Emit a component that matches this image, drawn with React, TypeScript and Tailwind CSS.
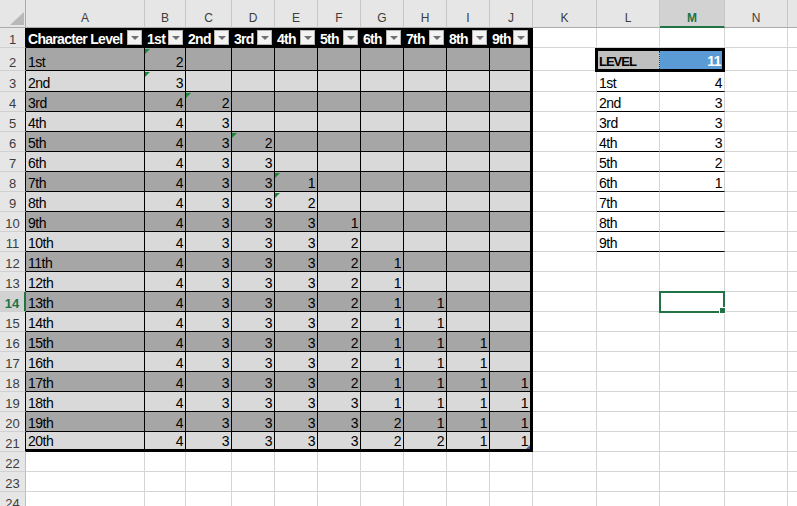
import type { ReactNode } from "react";

const LETTERS = ["A", "B", "C", "D", "E", "F", "G", "H", "I", "J", "K", "L", "M", "N", ""];
const ORD = [
  "1st", "2nd", "3rd", "4th", "5th", "6th", "7th", "8th", "9th", "10th",
  "11th", "12th", "13th", "14th", "15th", "16th", "17th", "18th", "19th", "20th",
];

// spell slots per character level (columns B..J)
const SLOTS = [
  [2],
  [3],
  [4, 2],
  [4, 3],
  [4, 3, 2],
  [4, 3, 3],
  [4, 3, 3, 1],
  [4, 3, 3, 2],
  [4, 3, 3, 3, 1],
  [4, 3, 3, 3, 2],
  [4, 3, 3, 3, 2, 1],
  [4, 3, 3, 3, 2, 1],
  [4, 3, 3, 3, 2, 1, 1],
  [4, 3, 3, 3, 2, 1, 1],
  [4, 3, 3, 3, 2, 1, 1, 1],
  [4, 3, 3, 3, 2, 1, 1, 1],
  [4, 3, 3, 3, 2, 1, 1, 1, 1],
  [4, 3, 3, 3, 3, 1, 1, 1, 1],
  [4, 3, 3, 3, 3, 2, 1, 1, 1],
  [4, 3, 3, 3, 3, 2, 2, 1, 1],
];

const FLAGS = ["2-2", "3-2", "4-3", "6-4", "8-5", "9-5"];
const LEVEL_SLOTS = [4, 3, 3, 3, 2, 1];
const ROWS = 24;
const COLS = 15;

function Dropdown() {
  return (
    <span className="mb-[1px] ml-auto mr-[2px] flex h-[15px] w-[15px] shrink-0 items-center justify-center border border-[#b4b4b4] bg-[#f3f3f3]">
      <span className="h-0 w-0 border-x-[4px] border-t-[4px] border-x-transparent border-t-[#707070]" />
    </span>
  );
}

function Flag() {
  return (
    <span className="absolute left-0 top-[1px] h-0 w-0 border-r-[5px] border-t-[5px] border-r-transparent border-t-[#1a8a3a]" />
  );
}

function renderCell(r: number, c: number): ReactNode {
  const key = `${r}-${c}`;

  // column header strip
  if (r === 0) {
    if (c === 0) {
      return (
        <div key={key} className="border-b border-r border-[#ababab] bg-[#e6e6e6]">
          <svg width="26" height="28" className="block">
            <polygon points="10,25 24,25 24,12" fill="#b9b9b9" />
          </svg>
        </div>
      );
    }
    if (c === 13) {
      return (
        <div
          key={key}
          className="flex items-end justify-center border-b-2 border-r border-b-[#217346] border-r-[#c6c6c6] bg-[#d2d2d2] pb-[2px] text-[12px] font-bold leading-[12px] text-[#217346]"
        >
          {LETTERS[c - 1]}
        </div>
      );
    }
    return (
      <div
        key={key}
        className="flex items-end justify-center border-b border-r border-b-[#ababab] border-r-[#c6c6c6] bg-[#e6e6e6] pb-[3px] text-[12px] leading-[12px] text-[#3c3c3c]"
      >
        {LETTERS[c - 1]}
      </div>
    );
  }

  // row header column
  if (c === 0) {
    if (r === 14) {
      return (
        <div
          key={key}
          className="flex items-end justify-center border-b border-r-2 border-b-[#d0d0d0] border-r-[#217346] bg-[#d2d2d2] pb-[1px] text-[13px] font-bold leading-[13px] text-[#217346]"
        >
          {r}
        </div>
      );
    }
    return (
      <div
        key={key}
        className={`flex items-end justify-center border-b border-r border-b-[#d0d0d0] bg-[#e6e6e6] pb-[1px] text-[13px] leading-[13px] text-[#3c3c3c] ${
          r <= 21 ? "border-r-black" : "border-r-[#bfbfbf]"
        }`}
      >
        {r}
      </div>
    );
  }

  const text = "relative flex items-end whitespace-nowrap pb-[1px] text-[14px] leading-[14px] tracking-[-0.5px]";

  // the table A1:J21
  if (r <= 21 && c <= 10) {
    const edge = `${c === 10 ? "border-r-[3px]" : "border-r"} ${r === 21 ? "border-b-[3px]" : "border-b"}`;
    if (r === 1) {
      const label = c === 1 ? "Character Level" : ORD[c - 2];
      return (
        <div key={key} className={`${text} ${edge} overflow-hidden border-black bg-black pl-[2px] font-bold tracking-[-0.7px] text-white`}>
          <span>{label}</span>
          <Dropdown />
        </div>
      );
    }
    const bg = r % 2 === 0 ? "bg-[#a6a6a6]" : "bg-[#d9d9d9]";
    if (c === 1) {
      return (
        <div key={key} className={`${text} ${edge} ${bg} border-black pl-[2px]`}>
          {ORD[r - 2]}
        </div>
      );
    }
    const v = SLOTS[r - 2][c - 2];
    return (
      <div key={key} className={`${text} ${edge} ${bg} justify-end border-black pr-[2px]`}>
        {FLAGS.includes(key) && <Flag />}
        {v ?? ""}
        {r === 21 && c === 10 && (
          <span className="absolute bottom-0 right-0 h-0 w-0 border-b-[4px] border-l-[4px] border-b-[#4b5aa6] border-l-transparent" />
        )}
      </div>
    );
  }

  // LEVEL box over L2:M2
  if (r === 2 && c === 12) {
    return (
      <div key={key} className="relative z-10 col-span-2 mb-[-1px] ml-[-2px] flex border-[3px] border-black text-[13px] font-bold leading-[13px]">
        <div className="flex w-[62px] items-end border-r border-dotted border-r-[#3a3a3a] bg-[#bfbfbf] pb-[1px] pl-[1px] tracking-[-1px]">
          LEVEL
        </div>
        <div className="flex flex-1 items-end justify-end bg-[#5b9bd5] pb-[1px] pr-[1px] text-[14px] leading-[14px] tracking-[-0.5px] text-white">
          11
        </div>
      </div>
    );
  }
  if (r === 2 && c === 13) return null;

  // slots lookup L3:M11
  if (r >= 3 && r <= 11 && (c === 12 || c === 13)) {
    if (c === 12) {
      return (
        <div key={key} className={`${text} border-b border-r border-b-black border-r-[#d4d4d4] pl-[2px]`}>
          {ORD[r - 3]}
        </div>
      );
    }
    return (
      <div key={key} className={`${text} justify-end border-b border-r border-b-black border-r-[#d4d4d4] pr-[2px]`}>
        {LEVEL_SLOTS[r - 3] ?? ""}
      </div>
    );
  }

  // active cell M14
  if (r === 14 && c === 13) {
    return (
      <div key={key} className="relative border-b border-r border-[#d4d4d4]">
        <div className="pointer-events-none absolute bottom-[-2px] left-[-1px] right-[-1px] top-[-1px] z-20 border-2 border-[#217346]">
          <span className="absolute bottom-[-3px] right-[-3px] h-[7px] w-[7px] border border-white bg-[#217346]" />
        </div>
      </div>
    );
  }

  return <div key={key} className="border-b border-r border-[#d4d4d4]" />;
}

export default function App() {
  const cells: ReactNode[] = [];
  for (let r = 0; r <= ROWS; r++) {
    for (let c = 0; c <= COLS; c++) {
      cells.push(renderCell(r, c));
    }
  }

  return (
    <div className="h-[506px] w-[797px] overflow-hidden bg-white font-['Liberation_Sans',Arial,sans-serif] text-black">
      <div className="grid w-max grid-cols-[26px_119px_41px_46px_43px_43px_43px_43px_43px_43px_43px_64px_63px_65px_63px_64px] grid-rows-[28px_20px_23px_21px_repeat(21,20px)]">
        {cells}
      </div>
    </div>
  );
}
